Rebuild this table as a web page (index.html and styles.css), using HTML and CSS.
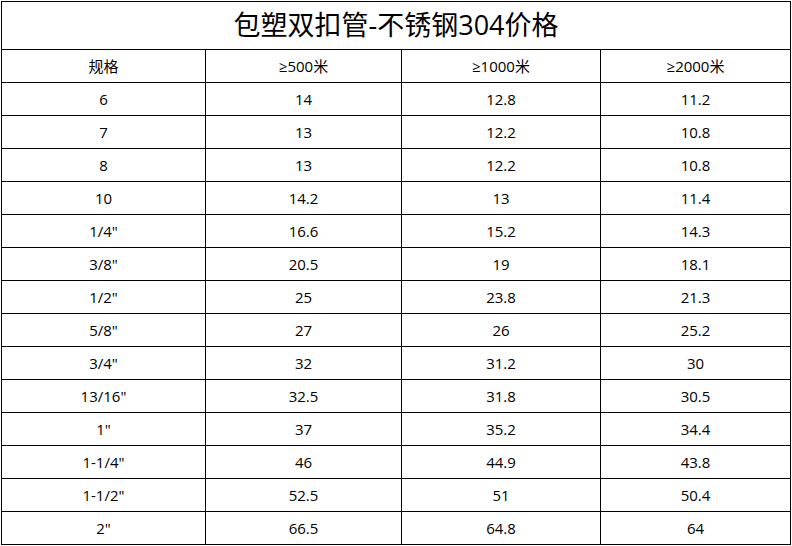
FILE: index.html
```html
<!DOCTYPE html>
<html lang="zh-CN">
<head>
<meta charset="utf-8">
<title>包塑双扣管-不锈钢304价格</title>
<link rel="stylesheet" href="styles.css">
</head>
<body>
<table class="price">
  <colgroup>
    <col class="c1"><col class="c2"><col class="c3"><col class="c4">
  </colgroup>
  <tr class="title-row"><td colspan="4">包塑双扣管-不锈钢304价格</td></tr>
  <tr><td>规格</td><td>≥500米</td><td>≥1000米</td><td>≥2000米</td></tr>
  <tr><td>6</td><td>14</td><td>12.8</td><td>11.2</td></tr>
  <tr><td>7</td><td>13</td><td>12.2</td><td>10.8</td></tr>
  <tr><td>8</td><td>13</td><td>12.2</td><td>10.8</td></tr>
  <tr><td>10</td><td>14.2</td><td>13</td><td>11.4</td></tr>
  <tr><td>1/4"</td><td>16.6</td><td>15.2</td><td>14.3</td></tr>
  <tr><td>3/8"</td><td>20.5</td><td>19</td><td>18.1</td></tr>
  <tr><td>1/2"</td><td>25</td><td>23.8</td><td>21.3</td></tr>
  <tr><td>5/8"</td><td>27</td><td>26</td><td>25.2</td></tr>
  <tr><td>3/4"</td><td>32</td><td>31.2</td><td>30</td></tr>
  <tr><td>13/16"</td><td>32.5</td><td>31.8</td><td>30.5</td></tr>
  <tr><td>1"</td><td>37</td><td>35.2</td><td>34.4</td></tr>
  <tr><td>1-1/4"</td><td>46</td><td>44.9</td><td>43.8</td></tr>
  <tr><td>1-1/2"</td><td>52.5</td><td>51</td><td>50.4</td></tr>
  <tr><td>2"</td><td>66.5</td><td>64.8</td><td>64</td></tr>
</table>
</body>
</html>
```
FILE: styles.css
```css
html, body {
  margin: 0;
  padding: 0;
  background: #ffffff;
}

.price {
  margin: 1px 0 0 1px;
  width: 790px;
  table-layout: fixed;
  border-collapse: separate;
  border-spacing: 1px;
  background: #000000;
  font-family: "Open Sans", "Noto Sans CJK SC", sans-serif;
  font-size: 15px;
  color: #000000;
}

.c1 { width: 203px; }
.c2 { width: 195px; }
.c3 { width: 198px; }
.c4 { width: 189px; }

.price td {
  background: #ffffff;
  padding: 0 0 1px 0;
  height: 31px;
  text-align: center;
  vertical-align: middle;
  line-height: 20px;
  white-space: nowrap;
}

.price .title-row td {
  height: 46px;
  font-size: 27px;
  line-height: 38px;
}
```
